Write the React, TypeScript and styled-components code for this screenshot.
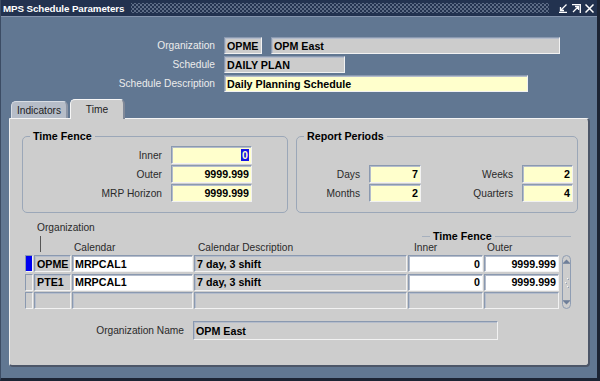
import React from 'react';
import styled, { createGlobalStyle } from 'styled-components';

const GlobalStyle = createGlobalStyle`
  html, body {
    margin: 0;
    padding: 0;
  }
  body {
    width: 600px;
    height: 381px;
    overflow: hidden;
    font-family: "Liberation Sans", Arial, sans-serif;
    font-size: 10.2px;
  }
`;

const PANEL = '#cdcdcd';
const YELLOW = '#ffffcc';

const Window = styled.div`
  width: 600px;
  height: 381px;
  box-sizing: border-box;
  background: #617792;
  border-left: 1px solid #3c4c64;
  border-right: 3px solid #1c2434;
  border-bottom: 3px solid #1c2434;
  display: flex;
  flex-direction: column;
`;

const TitleBar = styled.div`
  height: 16px;
  background: #22324f;
  border-bottom: 1px solid #8494ad;
  display: flex;
  align-items: center;
  padding-left: 2px;
  padding-right: 3px;
`;

const Title = styled.span`
  color: #ffffff;
  font-weight: bold;
  font-size: 9.8px;
  letter-spacing: -0.1px;
  white-space: nowrap;
`;

const Dots = styled.div`
  flex: 1;
  align-self: stretch;
  margin: 3px 10px 3px 7px;
  background-image: radial-gradient(circle, #7d8ca5 0.6px, transparent 0.9px),
    radial-gradient(circle, #7d8ca5 0.6px, transparent 0.9px);
  background-size: 4px 4px;
  background-position: 0 0, 2px 2px;
`;

const TitleIcons = styled.div`
  display: flex;
  gap: 4px;
  align-items: center;
`;

const HeaderForm = styled.div`
  display: grid;
  grid-template-columns: 214px auto;
  column-gap: 9px;
  row-gap: 2px;
  padding-top: 20px;
  align-items: center;
`;

const HeaderLabel = styled.span`
  color: #ececec;
  text-align: right;
  white-space: nowrap;
`;

const FieldRow = styled.div`
  display: flex;
  gap: 9px;
`;

const Field = styled.div<{ $w?: number; $bg?: string; $right?: boolean; $h?: number }>`
  width: ${(p) => (p.$w ? `${p.$w}px` : 'auto')};
  height: ${(p) => p.$h ?? 17}px;
  box-sizing: border-box;
  background: ${(p) => p.$bg ?? '#cccccc'};
  border: 1px solid;
  border-color: #8a99b0 #f2f2f2 #f2f2f2 #8a99b0;
  box-shadow: inset 1px 1px 0 #b4bccb;
  font-weight: bold;
  font-size: 10.7px;
  color: #000;
  display: flex;
  align-items: center;
  justify-content: ${(p) => (p.$right ? 'flex-end' : 'flex-start')};
  padding: 0 2px 0 2px;
  white-space: nowrap;
  overflow: hidden;
`;

const TabRow = styled.div`
  display: flex;
  align-items: flex-end;
  gap: 2px;
  margin-top: 7px;
  padding-left: 10px;
  height: 19px;
  position: relative;
  z-index: 1;
`;

const Tab = styled.div<{ $active?: boolean; $w: number }>`
  width: ${(p) => p.$w}px;
  height: ${(p) => (p.$active ? 20 : 17)}px;
  margin-bottom: ${(p) => (p.$active ? -1 : 0)}px;
  box-sizing: border-box;
  background: ${(p) => (p.$active ? PANEL : '#b6bdc8')};
  border-top: 1px solid ${(p) => (p.$active ? '#f6f6f6' : '#d8dde4')};
  border-left: 1px solid ${(p) => (p.$active ? '#f6f6f6' : '#d8dde4')};
  border-right: 2px solid ${(p) => (p.$active ? '#7f8898' : '#8d96a6')};
  border-radius: 5px 5px 0 0;
  color: #222;
  display: flex;
  align-items: center;
  justify-content: center;
  padding-top: ${(p) => (p.$active ? 0 : 1)}px;
`;

const Panel = styled.div`
  flex: 1;
  margin: 0 7px 11px 8px;
  background: ${PANEL};
  border-top: 1px solid #f4f4f4;
  border-left: 1px solid #eeeeee;
  border-right: 2px solid #4c5668;
  border-bottom: 2px solid #4c5668;
  border-radius: 0 4px 4px 4px;
  padding: 0 10px 0 12px;
  display: flex;
  flex-direction: column;
`;

const Groups = styled.div`
  display: flex;
  gap: 8px;
  margin-top: 11px;
`;

const Group = styled.fieldset<{ $w: number; $pt: number }>`
  width: ${(p) => p.$w}px;
  box-sizing: border-box;
  margin: 0;
  min-width: 0;
  border: 1px solid #9ba7b8;
  border-radius: 5px;
  padding: ${(p) => p.$pt}px 0 10px 0;
`;

const Legend = styled.legend`
  margin-left: 7px;
  padding: 0 3px;
  font-weight: bold;
  font-size: 10.7px;
  line-height: 13px;
  color: #000;
`;

const FormGrid = styled.div<{ $cols: string }>`
  display: grid;
  grid-template-columns: ${(p) => p.$cols};
  column-gap: 9px;
  row-gap: 1px;
  align-items: center;
`;

const Label = styled.span`
  color: #2a2a2a;
  text-align: right;
  white-space: nowrap;
`;

const Selected = styled.span`
  background: #1414e6;
  color: #ffffcc;
  padding: 0 1px;
`;

const Table = styled.div`
  display: grid;
  grid-template-columns: 7px 37px 121px 213px 75px 75px 11px;
  grid-template-rows: 12px 18px 17px 17px 17px;
  column-gap: 1px;
  row-gap: 1.5px;
  margin-top: 9px;
  padding-left: 4px;
`;

const ColHead = styled.span<{ $pl: number; $col: string }>`
  grid-column: ${(p) => p.$col};
  grid-row: 2;
  align-self: end;
  padding-left: ${(p) => p.$pl}px;
  line-height: 12px;
  color: #2a2a2a;
  white-space: nowrap;
`;

const OrgHead = styled.span`
  grid-column: 2 / 5;
  grid-row: 1;
  align-self: end;
  padding-left: 3px;
  line-height: 12px;
  color: #2a2a2a;
`;

const OrgLine = styled.div`
  grid-column: 2;
  grid-row: 2;
  width: 1px;
  margin-left: 6px;
  margin-bottom: 2px;
  background: #555;
`;

const FenceHead = styled.div`
  grid-column: 5 / 8;
  grid-row: 1 / 3;
  align-self: start;
  display: flex;
  align-items: center;
  gap: 3px;
  padding-left: 14px;
  font-weight: bold;
  font-size: 10.7px;
  color: #000;
  line-height: 12px;
  margin-top: 8px;
`;

const FenceLine = styled.div<{ $w?: number }>`
  height: 1px;
  background: #a6b0be;
  ${(p) => (p.$w ? `width: ${p.$w}px;` : 'flex: 1;')}
`;

const Indicator = styled.div<{ $active?: boolean; $row: number }>`
  grid-column: 1;
  grid-row: ${(p) => p.$row};
  box-sizing: border-box;
  border: 1px solid;
  border-color: #8a99b0 #f2f2f2 #f2f2f2 #8a99b0;
  background: ${(p) => (p.$active ? '#0000f0' : PANEL)};
  margin-left: -1px;
`;

const Cell = styled(Field)<{ $row: number; $col: number }>`
  grid-column: ${(p) => p.$col};
  grid-row: ${(p) => p.$row};
`;

const Scroll = styled.div`
  grid-column: 7;
  grid-row: 3 / 6;
  margin-left: 2px;
  box-sizing: border-box;
  border: 1px solid #8f9db3;
  border-radius: 5px;
  display: flex;
  flex-direction: column;
  align-items: center;
  justify-content: space-between;
  padding: 1px 0;
`;

const ScrollBtn = styled.div`
  width: 9px;
  height: 9px;
  display: flex;
  align-items: center;
  justify-content: center;
`;

const Grip = styled.div`
  display: flex;
  flex-direction: column;
  gap: 3px;
  align-items: center;
`;

const Dot = styled.div<{ $dx: number }>`
  width: 1px;
  height: 1px;
  background: #f8f8f8;
  box-shadow: 1px 1px 0 #8f9db3;
  margin-left: ${(p) => p.$dx}px;
`;

const OrgNameRow = styled.div`
  display: flex;
  align-items: center;
  gap: 9px;
  margin-top: 12px;
`;

const OrgNameLabel = styled(Label)`
  width: 162px;
`;

const MinIcon = () => (
  <svg width="9" height="9" viewBox="0 0 9 9">
    <path d="M7.5 0.5 L2 6 M1.5 3 V6.5 H5 M0 8.5 H8" stroke="#fff" strokeWidth="1.3" fill="none" />
  </svg>
);

const MaxIcon = () => (
  <svg width="9" height="9" viewBox="0 0 9 9">
    <path d="M0 0.7 H8.3 V9 M1 8 L6.5 2.5 M3 2.5 H6.5 V6" stroke="#fff" strokeWidth="1.3" fill="none" />
  </svg>
);

const CloseIcon = () => (
  <svg width="9" height="9" viewBox="0 0 9 9">
    <path d="M0.5 0.5 L8.5 8.5 M8.5 0.5 L0.5 8.5" stroke="#fff" strokeWidth="1.5" fill="none" />
  </svg>
);

const Arrow = ({ up }: { up?: boolean }) => (
  <svg width="7" height="5" viewBox="0 0 7 5">
    <path d={up ? 'M0 4 L3.5 0.5 L7 4 Z' : 'M0 1 L3.5 4.5 L7 1 Z'} fill="#6f7f99" />
    <path d={up ? 'M0 4.5 H7' : 'M0 0.5 H7'} stroke="#6f7f99" strokeWidth="0.8" />
  </svg>
);

const rows = [
  { org: 'OPME', cal: 'MRPCAL1', desc: '7 day, 3 shift', inner: '0', outer: '9999.999', active: true },
  { org: 'PTE1', cal: 'MRPCAL1', desc: '7 day, 3 shift', inner: '0', outer: '9999.999' },
  { org: '', cal: '', desc: '', inner: '', outer: '' },
];

export default function App() {
  return (
    <>
      <GlobalStyle />
      <Window>
        <TitleBar>
          <Title>MPS Schedule Parameters</Title>
          <Dots />
          <TitleIcons>
            <MinIcon />
            <MaxIcon />
            <CloseIcon />
          </TitleIcons>
        </TitleBar>

        <HeaderForm>
          <HeaderLabel>Organization</HeaderLabel>
          <FieldRow>
            <Field $w={38}>OPME</Field>
            <Field $w={289}>OPM East</Field>
          </FieldRow>
          <HeaderLabel>Schedule</HeaderLabel>
          <FieldRow>
            <Field $w={121}>DAILY PLAN</Field>
          </FieldRow>
          <HeaderLabel>Schedule Description</HeaderLabel>
          <FieldRow>
            <Field $w={304} $bg={YELLOW}>Daily Planning Schedule</Field>
          </FieldRow>
        </HeaderForm>

        <TabRow>
          <Tab $w={57}>Indicators</Tab>
          <Tab $w={55} $active>Time</Tab>
        </TabRow>

        <Panel>
          <Groups>
            <Group $w={266} $pt={3}>
              <Legend>Time Fence</Legend>
              <FormGrid $cols="139px 81px">
                <Label>Inner</Label>
                <Field $w={81} $h={18} $bg={YELLOW} $right>
                  <Selected>0</Selected>
                </Field>
                <Label>Outer</Label>
                <Field $w={81} $h={18} $bg={YELLOW} $right>9999.999</Field>
                <Label>MRP Horizon</Label>
                <Field $w={81} $h={18} $bg={YELLOW} $right>9999.999</Field>
              </FormGrid>
            </Group>
            <Group $w={282} $pt={22}>
              <Legend>Report Periods</Legend>
              <FormGrid $cols="63px 52px 83px 51px">
                <Label>Days</Label>
                <Field $w={52} $h={18} $bg={YELLOW} $right>7</Field>
                <Label>Weeks</Label>
                <Field $w={51} $h={18} $bg={YELLOW} $right>2</Field>
                <Label>Months</Label>
                <Field $w={52} $h={18} $bg={YELLOW} $right>2</Field>
                <Label>Quarters</Label>
                <Field $w={51} $h={18} $bg={YELLOW} $right>4</Field>
              </FormGrid>
            </Group>
          </Groups>

          <Table>
            <OrgHead>Organization</OrgHead>
            <FenceHead>
              <FenceLine $w={8} />
              <span>Time Fence</span>
              <FenceLine />
            </FenceHead>
            <OrgLine />
            <ColHead $col="3" $pl={2}>Calendar</ColHead>
            <ColHead $col="4" $pl={4}>Calendar Description</ColHead>
            <ColHead $col="5" $pl={6}>Inner</ColHead>
            <ColHead $col="6" $pl={3}>Outer</ColHead>

            {rows.map((r, i) => {
              const row = i + 3;
              return (
                <React.Fragment key={i}>
                  <Indicator $row={row} $active={r.active} />
                  <Cell $row={row} $col={2}>{r.org}</Cell>
                  <Cell $row={row} $col={3} $bg={r.cal ? '#ffffff' : PANEL}>{r.cal}</Cell>
                  <Cell $row={row} $col={4} $bg={PANEL}>{r.desc}</Cell>
                  <Cell $row={row} $col={5} $bg={r.inner ? '#ffffff' : PANEL} $right>{r.inner}</Cell>
                  <Cell $row={row} $col={6} $bg={r.outer ? '#ffffff' : PANEL} $right>{r.outer}</Cell>
                </React.Fragment>
              );
            })}

            <Scroll>
              <ScrollBtn>
                <Arrow up />
              </ScrollBtn>
              <Grip>
                <Dot $dx={2} />
                <Dot $dx={-2} />
                <Dot $dx={2} />
              </Grip>
              <ScrollBtn>
                <Arrow />
              </ScrollBtn>
            </Scroll>
          </Table>

          <OrgNameRow>
            <OrgNameLabel>Organization Name</OrgNameLabel>
            <Field $w={305} $h={19} $bg={PANEL}>OPM East</Field>
          </OrgNameRow>
        </Panel>
      </Window>
    </>
  );
}
